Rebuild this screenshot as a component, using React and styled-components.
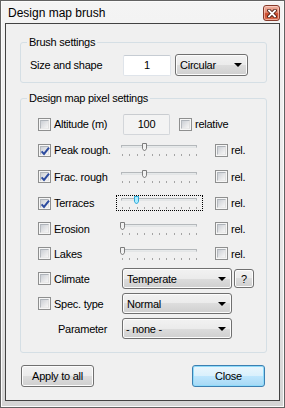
import React from "react";
import styled, { createGlobalStyle } from "styled-components";

const GlobalStyle = createGlobalStyle`
  html, body { margin: 0; padding: 0; background: #fff; }
  body { font-family: "Liberation Sans", Arial, sans-serif; font-size: 11px; color: #000; }
  * { box-sizing: border-box; }
`;

const Window = styled.div`
  width: 285px;
  height: 408px;
  border: 1px solid #626262;
  background: linear-gradient(#f4f4f4, #e6e6e6 70%, #d4d4d4);
  box-shadow: inset 0 0 0 1px #fbfbfb;
  padding: 0 4px 6px 4px;
  display: flex;
  flex-direction: column;
`;

const TitleBar = styled.div`
  height: 22px;
  flex: none;
  display: flex;
  align-items: flex-start;
  justify-content: space-between;
  padding: 0 0 0 3px;
`;

const Title = styled.span`
  margin-top: 3px;
  line-height: 19px;
  font-size: 12px;
`;

const CloseX = styled.div`
  margin-top: 4px;
  width: 17px;
  height: 16px;
  border: 1px solid #86392a;
  border-radius: 3px;
  background: linear-gradient(#efb3a3 0%, #e38a72 45%, #cc4a2d 55%, #d96a4b 100%);
  box-shadow: inset 0 0 0 1px rgba(255, 220, 210, 0.6);
  display: flex;
  align-items: center;
  justify-content: center;
`;

const Client = styled.div`
  flex: 1;
  border: 1px solid #424242;
  background: #f0f0f0;
  padding: 18px 12px 0 14px;
  display: flex;
  flex-direction: column;
  font-size: 11px;
  letter-spacing: -0.25px;
`;

const Group = styled.div`
  position: relative;
  border: 1px solid #d5dfe5;
  border-radius: 3px;
  margin-top: ${(p) => p.$mt}px;
  padding: ${(p) => p.$pad};
`;

const Caption = styled.span`
  position: absolute;
  top: -7px;
  left: 6px;
  padding: 0 2px;
  line-height: 13px;
  background: #f0f0f0;
`;

const BrushRow = styled.div`
  height: 22px;
  display: flex;
  align-items: center;
`;

const FieldLabel = styled.span`
  width: ${(p) => p.$w}px;
  padding-left: ${(p) => p.$indent || 0}px;
  flex: none;
`;

const TextBox = styled.div`
  width: ${(p) => p.$w}px;
  height: 21px;
  margin-left: ${(p) => p.$ml || 0}px;
  flex: none;
  display: flex;
  align-items: center;
  justify-content: center;
  border: 1px solid ${(p) => (p.$readOnly ? "#d3d6da" : "#dfe4ea")};
  border-top-color: ${(p) => (p.$readOnly ? "#c9ccd0" : "#c6ccd3")};
  border-radius: 2px;
  background: ${(p) => (p.$readOnly ? "#f3f3f3" : "#fff")};
`;

const Combo = styled.div`
  width: ${(p) => p.$w}px;
  height: ${(p) => p.$h || 21}px;
  margin-left: ${(p) => p.$ml || 0}px;
  flex: none;
  display: flex;
  align-items: center;
  justify-content: space-between;
  padding: 0 5px 0 ${(p) => p.$pl || 4}px;
  border: 1px solid #707070;
  border-radius: 3px;
  background: linear-gradient(#f2f2f2 0%, #ebebeb 50%, #dddddd 50%, #cfcfcf 100%);
  box-shadow: inset 0 0 0 1px #fcfcfc;
`;

const Arrow = styled.span`
  width: 0;
  height: 0;
  border-left: 4px solid transparent;
  border-right: 4px solid transparent;
  border-top: 4px solid #000;
`;

const PushButton = styled.div`
  width: ${(p) => p.$w}px;
  height: ${(p) => p.$h}px;
  margin-left: ${(p) => p.$ml || 0}px;
  flex: none;
  display: flex;
  align-items: center;
  justify-content: center;
  border: 1px solid ${(p) => (p.$default ? "#3c7fb1" : "#707070")};
  border-radius: 3px;
  background: ${(p) =>
    p.$default
      ? "linear-gradient(#eaf6fd 0%, #d9f0fc 50%, #bee6fd 50%, #a7d9f5 100%)"
      : "linear-gradient(#f2f2f2 0%, #ebebeb 50%, #dddddd 50%, #cfcfcf 100%)"};
  box-shadow: inset 0 0 0 1px ${(p) => (p.$default ? "#8fdbfa" : "#fcfcfc")};
`;

const Rows = styled.div`
  display: flex;
  flex-direction: column;
`;

const Row = styled.div`
  height: ${(p) => p.$h}px;
  display: flex;
  align-items: center;
  padding-left: 17px;
`;

const CheckLabel = styled.label`
  display: flex;
  align-items: center;
  gap: 3px;
  flex: none;
  width: ${(p) => p.$w || 78}px;
  margin-left: ${(p) => p.$ml || 0}px;
`;

const Box = styled.span`
  position: relative;
  width: 13px;
  height: 13px;
  flex: none;
  border: 1px solid #8e8f8f;
  background: #f6f6f6;
  display: flex;
  align-items: center;
  justify-content: center;
`;

const BoxFill = styled.span`
  width: 9px;
  height: 9px;
  border: 1px solid;
  border-color: #aeb3b9 #e0e0e0 #e9e9e9 #b5b9be;
  background: linear-gradient(135deg, #cbcfd5 0%, #e4e5e7 55%, #f6f6f6 100%);
`;

const Tick = styled.svg`
  position: absolute;
  left: 0;
  top: 0;
`;

const SliderBox = styled.div`
  position: relative;
  width: 87px;
  height: 16px;
  flex: none;
  padding: 2px 5px 0 4px;
  border: 1px dotted ${(p) => (p.$focused ? "#000" : "transparent")};
`;

const Track = styled.div`
  height: 3px;
  border: 1px solid #b4b8bb;
  border-bottom-color: #e3e5e6;
  background: #e6e9ea;
`;

const Ticks = styled.div`
  margin-top: 6px;
  padding-left: 1px;
  display: flex;
  justify-content: space-between;
`;

const TickMark = styled.span`
  width: 1px;
  height: 2px;
  background: #a4a4a4;
`;

const Thumb = styled.svg`
  position: absolute;
  top: 0;
`;

const ButtonRow = styled.div`
  margin-top: 12px;
  display: flex;
  justify-content: space-between;
  padding: 0 2px 0 1px;
`;

const Check = ({ checked, label, w, ml }) => (
  <CheckLabel $w={w} $ml={ml}>
    <Box>
      <BoxFill />
      {checked && (
        <Tick width="13" height="13" viewBox="0 0 13 13">
          <path d="M2.6 6.4 L5 8.9 L10 2.6" fill="none" stroke="#2c4b9f" strokeWidth="2" />
        </Tick>
      )}
    </Box>
    {label && <span>{label}</span>}
  </CheckLabel>
);

const Slider = ({ value, focused }) => {
  const left = Math.round(2.5 + 7.4 * value);
  return (
    <SliderBox $focused={focused}>
      <Track />
      <Ticks>
        {Array.from({ length: 11 }).map((_, i) => (
          <TickMark key={i} />
        ))}
      </Ticks>
      <Thumb width="5" height="9" viewBox="0 0 5 9" style={{ left }}>
        <path
          d="M0.5 0.5 H4.5 V5.8 L2.5 8 L0.5 5.8 Z"
          fill={focused ? "#a8ecff" : "#f2f2f2"}
          stroke={focused ? "#2fa8d8" : "#7c7c7c"}
          strokeWidth="1"
        />
      </Thumb>
    </SliderBox>
  );
};

const SliderRow = ({ h, label, checked, value, focused }) => (
  <Row $h={h}>
    <Check checked={checked} label={label} />
    <Slider value={value} focused={focused} />
    <Check label="rel." ml={12} w={40} />
  </Row>
);

export default function App() {
  return (
    <>
      <GlobalStyle />
      <Window>
        <TitleBar>
          <Title>Design map brush</Title>
          <CloseX>
            <svg width="10" height="9" viewBox="0 0 10 9">
              <path d="M2 1.5 L8 7.5 M8 1.5 L2 7.5" stroke="#4a1a10" strokeWidth="3.6" strokeLinecap="square" />
              <path d="M2 1.5 L8 7.5 M8 1.5 L2 7.5" stroke="#fff" strokeWidth="1.8" strokeLinecap="square" />
            </svg>
          </CloseX>
        </TitleBar>
        <Client>
          <Group $mt={0} $pad="11px 0 6px 9px">
            <Caption>Brush settings</Caption>
            <BrushRow>
              <FieldLabel $w={93}>Size and shape</FieldLabel>
              <TextBox $w={48}>1</TextBox>
              <Combo $w={73} $h={22} $ml={4}>
                Circular
                <Arrow />
              </Combo>
            </BrushRow>
          </Group>

          <Group $mt={15} $pad="12px 0 11px 0">
            <Caption>Design map pixel settings</Caption>
            <Rows>
              <Row $h={26}>
                <Check label="Altitude (m)" />
                <TextBox $w={47} $ml={7} $readOnly>100</TextBox>
                <Check label="relative" ml={9} w={60} />
              </Row>
              <SliderRow h={26} label="Peak rough." checked value={3} />
              <SliderRow h={27} label="Frac. rough" checked value={3} />
              <SliderRow h={26} label="Terraces" checked value={2} focused />
              <SliderRow h={25} label="Erosion" value={0} />
              <SliderRow h={25} label="Lakes" value={0} />
              <Row $h={25}>
                <Check label="Climate" />
                <Combo $w={110} $ml={6}>
                  Temperate
                  <Arrow />
                </Combo>
                <PushButton $w={20} $h={19} $ml={2}>?</PushButton>
              </Row>
              <Row $h={25}>
                <Check label="Spec. type" />
                <Combo $w={110} $ml={6}>
                  Normal
                  <Arrow />
                </Combo>
              </Row>
              <Row $h={25}>
                <FieldLabel $w={78} $indent={20}>Parameter</FieldLabel>
                <Combo $w={110} $ml={6} $pl={3}>
                  - none -
                  <Arrow />
                </Combo>
              </Row>
            </Rows>
          </Group>

          <ButtonRow>
            <PushButton $w={73} $h={22}>Apply to all</PushButton>
            <PushButton $w={73} $h={22} $default>Close</PushButton>
          </ButtonRow>
        </Client>
      </Window>
    </>
  );
}
